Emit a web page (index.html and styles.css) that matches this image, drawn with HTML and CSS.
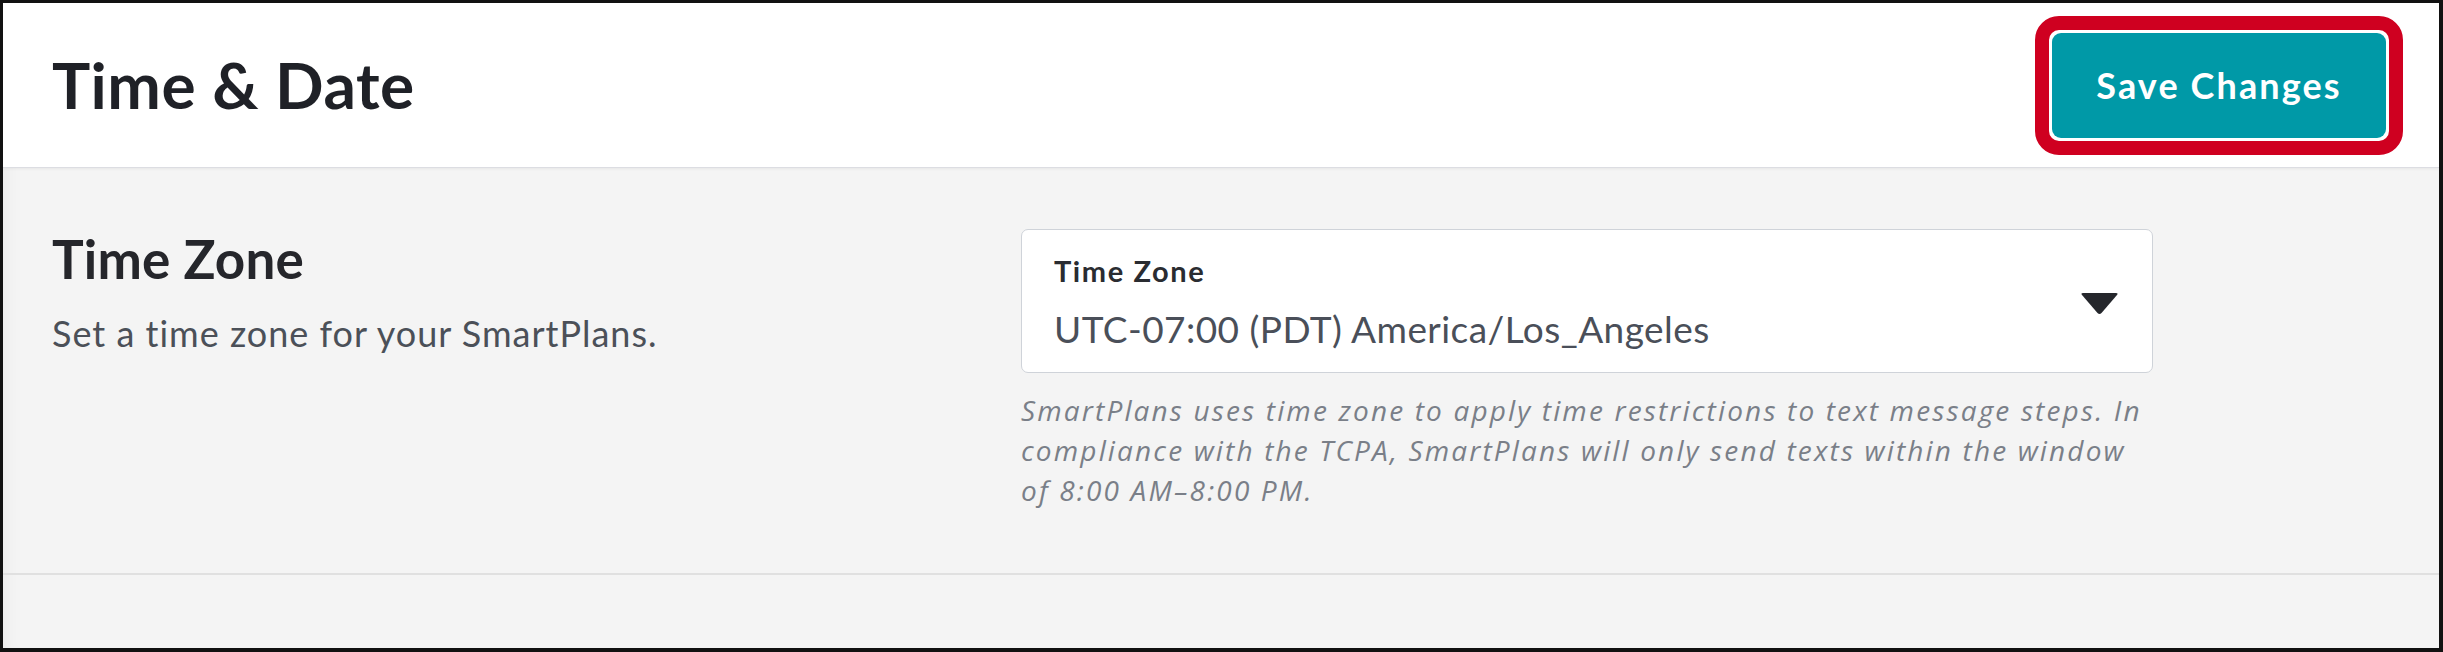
FILE: index.html
```html
<!DOCTYPE html>
<html lang="en">
<head>
<meta charset="utf-8">
<title>Time &amp; Date</title>
<link rel="stylesheet" href="styles.css">
</head>
<body>
<div class="frame">
  <header class="page-header">
    <h1 class="page-title">Time &amp; Date</h1>
    <div class="highlight">
      <button class="btn-save" type="button">Save Changes</button>
    </div>
  </header>
  <section class="setting">
    <div class="setting-info">
      <h2 class="setting-title">Time Zone</h2>
      <p class="setting-desc">Set a time zone for your SmartPlans.</p>
    </div>
    <div class="setting-control">
      <div class="select">
        <div class="select-text">
          <div class="select-label">Time Zone</div>
          <div class="select-value">UTC-07:00 (PDT) America/Los_Angeles</div>
        </div>
        <svg class="select-arrow" width="39" height="23" viewBox="0 0 39 23" aria-hidden="true">
          <path d="M3 1 H36 Q38.5 1 37 3 L21.5 21 Q19.5 23 17.5 21 L2 3 Q0.5 1 3 1 Z" fill="#25272c"/>
        </svg>
      </div>
      <p class="help">SmartPlans uses time zone to apply time restrictions to text message steps. In compliance with the TCPA, SmartPlans will only send texts within the window of 8:00 AM–8:00 PM.</p>
    </div>
  </section>
</div>
</body>
</html>
```

FILE: styles.css
```css
* { box-sizing: border-box; }

html, body {
  margin: 0;
  padding: 0;
  background: #ffffff;
}

body {
  font-family: Lato, "Open Sans", "Liberation Sans", sans-serif;
}

.frame {
  width: 2443px;
  height: 652px;
  border: 3px solid #111111;
  border-right-width: 4px;
  border-bottom-width: 4px;
  background: #f4f4f4;
  overflow: hidden;
  box-shadow: inset 14px 0 18px -14px rgba(0, 0, 0, 0.06);
}

.page-header {
  height: 165px;
  background: #ffffff;
  border-bottom: 1px solid #dcdde2;
  box-shadow: 0 1px 3px rgba(0, 0, 0, 0.06);
  display: flex;
  align-items: center;
  justify-content: space-between;
  padding: 0 36px 0 49px;
  position: relative;
}

.page-title {
  margin: 0;
  font-size: 64px;
  font-weight: 700;
  color: #1f2127;
  letter-spacing: 0.5px;
  line-height: 1;
}

.highlight {
  border: 14px solid #cf0020;
  border-radius: 24px;
  padding: 3px;
  background: #ffffff;
  display: flex;
}

.btn-save {
  width: 334px;
  height: 105px;
  border: none;
  border-radius: 9px;
  background: #0099a7;
  color: #ffffff;
  font-family: Lato, "Open Sans", "Liberation Sans", sans-serif;
  font-size: 36px;
  font-weight: 700;
  letter-spacing: 2.1px;
  padding: 0;
}

.setting {
  display: grid;
  grid-template-columns: 969px 1132px;
  padding: 61px 0 63px 49px;
  border-bottom: 2px solid #e0e0e0;
}

.setting-title {
  margin: 3px 0 0 0;
  font-size: 53px;
  font-weight: 700;
  line-height: 1;
  color: #25262b;
  letter-spacing: 0.2px;
}

.setting-desc {
  margin: 27px 0 0 0;
  font-size: 36px;
  line-height: 1.2;
  color: #4b5058;
  letter-spacing: 1px;
}

.select {
  height: 144px;
  background: #ffffff;
  border: 1px solid #cfd3d9;
  border-radius: 7px;
  display: flex;
  align-items: center;
  justify-content: space-between;
  padding: 0 33px 0 32px;
}

.select-text {
  display: flex;
  flex-direction: column;
  gap: 18px;
  padding-top: 3px;
}

.select-label {
  font-size: 29px;
  font-weight: 700;
  line-height: 1.2;
  color: #2a2c31;
  letter-spacing: 1.6px;
}

.select-value {
  font-size: 37px;
  line-height: 1.2;
  color: #4a4f59;
  letter-spacing: 0.45px;
}

.select-arrow {
  display: block;
  margin-top: 4px;
}

.help {
  margin: 17px 0 0 0;
  font-family: "Open Sans", Lato, sans-serif;
  font-size: 28px;
  line-height: 40px;
  font-style: italic;
  color: #7a7f88;
  letter-spacing: 2.15px;
  width: 1136px;
}
```
